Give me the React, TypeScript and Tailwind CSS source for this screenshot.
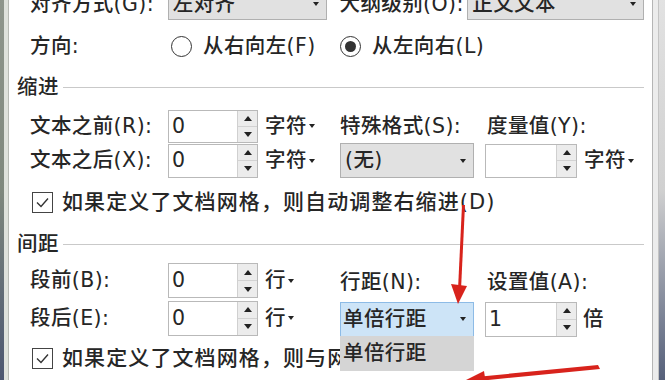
import React from 'react'

const font = "font-['DejaVu_Sans','Noto_Sans_CJK_SC',sans-serif]"

function Caret() {
  return <span className="inline-block w-0 h-0 border-l-[3px] border-r-[3px] border-t-[4px] border-l-transparent border-r-transparent border-t-[#222]" />
}

function Spin({ value, className = '' }: { value: string; className?: string }) {
  return (
    <div className={`flex border border-[#b9b9b9] bg-white ${className}`}>
      <div className="flex-1 pl-[3px] flex items-center">{value}</div>
      <div className="w-[20px] flex flex-col border-l border-[#d0d0d0] bg-[#ececec]">
        <div className="flex-1 flex items-center justify-center border-b border-[#d2d2d2]">
          <span className="w-0 h-0 border-l-[4px] border-r-[4px] border-b-[5px] border-l-transparent border-r-transparent border-b-[#222]" />
        </div>
        <div className="flex-1 flex items-center justify-center">
          <span className="w-0 h-0 border-l-[4px] border-r-[4px] border-t-[5px] border-l-transparent border-r-transparent border-t-[#222]" />
        </div>
      </div>
    </div>
  )
}

function Drop({ text, className = '' }: { text: string; className?: string }) {
  return (
    <div className={`flex items-center justify-between pl-[4px] pr-[7px] border border-[#b0b0b0] bg-[#e1e1e1] ${className}`}>
      <span>{text}</span>
      <Caret />
    </div>
  )
}

function Unit({ text }: { text: string }) {
  return (
    <span className="ml-[7px] flex items-center gap-[2px]">
      {text}
      <Caret />
    </span>
  )
}

function Radio({ on, label }: { on?: boolean; label: string }) {
  return (
    <div className="flex items-center gap-[11px]">
      <span className="w-[21px] h-[21px] rounded-full border-[1.5px] border-[#333] flex items-center justify-center">
        {on && <span className="w-[11px] h-[11px] rounded-full bg-[#333]" />}
      </span>
      {label}
    </div>
  )
}

function Check() {
  return (
    <span className="w-[21px] h-[21px] border-[1.5px] border-[#444] flex items-center justify-center">
      <svg width="15" height="15" viewBox="0 0 15 15">
        <path d="M2 7.5 L6 11.5 L13 3.5" fill="none" stroke="#333" strokeWidth="1.4" />
      </svg>
    </span>
  )
}

function Section({ title, className = '' }: { title: string; className?: string }) {
  return (
    <div className={`flex items-center pl-[8px] ${className}`}>
      <span>{title}</span>
      <span className="flex-1 h-px bg-[#c9c9c9] ml-[4px]" />
    </div>
  )
}

export default function App() {
  return (
    <div className={`relative w-[665px] h-[380px] overflow-hidden flex bg-white text-[20.5px] tracking-[0.4px] font-medium text-[#262626] leading-none ${font}`}>
      {/* left edge behind the dialog */}
      <div className="w-[9px] flex">
        <div className="w-[4px] bg-gradient-to-b from-[#8f968c] via-[#7f887d] to-[#4c5670]" />
        <div className="w-[5px] bg-[#dfe2dc] border-r border-[#b7bab4]" />
      </div>

      {/* dialog */}
      <div className="w-[644px] flex flex-col pr-[8px] border-r border-[#b5b5b5]">
        {/* 对齐方式 */}
        <div className="h-[22px] flex items-end pb-[2px] pl-[21px]">
          <div className="w-[138px] h-[32px] flex items-center">对齐方式(G):</div>
          <div className="w-[172px]">
            <Drop text="左对齐" className="w-[159px] h-[32px]" />
          </div>
          <div className="w-[128px] h-[32px] flex items-center">大纲级别(O):</div>
          <Drop text="正文文本" className="w-[177px] h-[32px]" />
        </div>

        {/* 方向 */}
        <div className="h-[48px] flex items-center pl-[21px]">
          <div className="w-[141px]">方向:</div>
          <div className="w-[169px]">
            <Radio label="从右向左(F)" />
          </div>
          <Radio on label="从左向右(L)" />
        </div>

        <Section title="缩进" className="h-[34px]" />

        <div className="mt-[5px] h-[34px] flex items-center pl-[21px]">
          <div className="w-[138px]">文本之前(R):</div>
          <div className="w-[172px] flex items-center">
            <Spin value="0" className="w-[90px] h-[33px]" />
            <Unit text="字符" />
          </div>
          <div className="w-[147px]">特殊格式(S):</div>
          <div>度量值(Y):</div>
        </div>

        <div className="h-[35px] flex items-center pl-[21px]">
          <div className="w-[138px]">文本之后(X):</div>
          <div className="w-[172px] flex items-center">
            <Spin value="0" className="w-[90px] h-[34px]" />
            <Unit text="字符" />
          </div>
          <div className="w-[145px]">
            <Drop text="(无)" className="w-[134px] h-[35px]" />
          </div>
          <Spin value="" className="w-[92px] h-[34px]" />
          <Unit text="字符" />
        </div>

        <div className="h-[48px] flex items-center pl-[23px]">
          <Check />
          <span className="ml-[9px] text-[21px] tracking-[1.1px]">如果定义了文档网格，则自动调整右缩进(D)</span>
        </div>

        <Section title="间距" className="h-[36px]" />

        <div className="h-[37px] flex items-center pl-[21px]">
          <div className="w-[138px]">段前(B):</div>
          <div className="w-[172px] flex items-center">
            <Spin value="0" className="w-[90px] h-[35px]" />
            <Unit text="行" />
          </div>
          <div className="w-[147px] pt-[4px]">行距(N):</div>
          <div className="pt-[4px]">设置值(A):</div>
        </div>

        <div className="h-[38px] flex items-center pl-[21px]">
          <div className="w-[138px]">段后(E):</div>
          <div className="w-[172px] flex items-center">
            <Spin value="0" className="w-[90px] h-[35px]" />
            <Unit text="行" />
          </div>
          <div className="w-[145px] pt-[2px]">
            <div className="relative w-[134px] h-[35px] flex items-center justify-between pl-[2px] pr-[7px] border border-[#8dbbe6] bg-[#cde4f7]">
              <span>单倍行距</span>
              <Caret />
              {/* open list */}
              <div className="absolute left-[-1px] top-full w-[134px] h-[35px] flex items-center pl-[3px] bg-[#d5d5d5]">
                单倍行距
              </div>
            </div>
          </div>
          <div className="pt-[2px] flex items-center">
            <Spin value="1" className="w-[92px] h-[35px]" />
            <span className="ml-[6px]">倍</span>
          </div>
        </div>

        <div className="h-[42px] flex items-center pl-[23px]">
          <Check />
          <span className="ml-[9px] w-[280px] overflow-hidden whitespace-nowrap text-[21px] tracking-[1.1px]">如果定义了文档网格，则与网格对齐(W)</span>
        </div>
      </div>

      {/* right edge */}
      <div className="w-[12px] flex">
        <div className="w-[6px] bg-[#ececec] border-r border-[#c4c4c4]" />
        <div className="w-[6px] bg-gradient-to-b from-[#e2e2e2] via-[#d0d0d0] to-[#56607a]" />
      </div>

      {/* red annotation arrows */}
      <svg className="absolute inset-0 pointer-events-none" width="665" height="380" viewBox="0 0 665 380">
        <polygon points="462,205 465,205 461,290 458,290" fill="#d8231c" />
        <polygon points="451,284 467,286 458,304" fill="#d8231c" />
        <polygon points="598,365 600,369 478,381 476,377" fill="#d8231c" />
        <polygon points="484,371 486,384 458,384" fill="#d8231c" />
      </svg>
    </div>
  )
}
